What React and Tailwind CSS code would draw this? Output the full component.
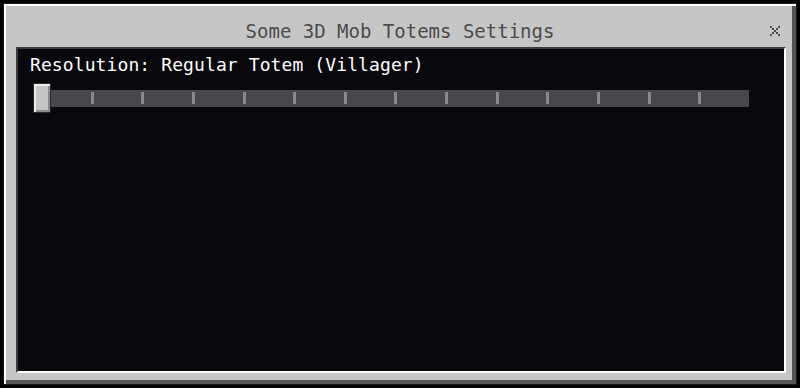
import React from "react";

const ticks = Array.from({ length: 15 }, (_, i) => i);

function CloseIcon() {
  const cells = [
    [0, 0], [8, 0],
    [2, 2], [6, 2],
    [4, 4],
    [2, 6], [6, 6],
    [0, 8], [8, 8],
  ];
  return (
    <svg width="10" height="10" viewBox="0 0 10 10" className="block">
      {cells.map(([x, y], i) => (
        <rect key={i} x={x} y={y} width="2" height="2" fill="#4a4a4a" />
      ))}
      <rect x="1" y="1" width="1" height="1" fill="#8a8a8a" />
      <rect x="8" y="1" width="1" height="1" fill="#8a8a8a" />
      <rect x="1" y="8" width="1" height="1" fill="#8a8a8a" />
      <rect x="8" y="8" width="1" height="1" fill="#8a8a8a" />
    </svg>
  );
}

export default function App() {
  return (
    <div className="w-[800px] h-[388px] bg-black pt-[3px] pl-[3px] pr-[3px] pb-[3px] [font-family:'DejaVu_Sans_Mono',monospace]">
      <div className="flex h-full flex-col bg-[#c6c6c6] border border-[#1a1a1a] shadow-[inset_2px_2px_0_#ffffff,inset_-4px_-4px_0_#555555]">
        <div className="grid h-[43px] grid-cols-[1fr_auto_1fr] items-start">
          <div />
          <div className="pt-[16px] text-[19px] leading-[22px] text-[#4c4c4c]">
            Some 3D Mob Totems Settings
          </div>
          <div className="flex justify-end pr-[16px] pt-[22px]">
            <CloseIcon />
          </div>
        </div>
        <div className="ml-[12px] mr-[10px] mb-[11px] flex-1 border-l-2 border-t-2 border-r-2 border-b-2 border-l-[#3c3c3c] border-t-[#3c3c3c] border-r-white border-b-white bg-[#09080c]">
          <div className="pl-[12px] pt-[5px] text-[18px] leading-[22px] tracking-[0.1px] text-white">
            Resolution: Regular Totem (Villager)
          </div>
          <div className="relative ml-[15px] mt-[7px] flex h-[30px] w-[716px] items-center">
            <div className="h-[17px] w-full bg-[#48474c]">
              <div className="flex h-full items-center justify-between pl-[7px] -mr-[3px]">
                {ticks.map((i) => (
                  <div
                    key={i}
                    className={
                      i === 0 || i === 14
                        ? "h-[12px] w-[3px]"
                        : "h-[12px] w-[3px] bg-[#8a898d]"
                    }
                  />
                ))}
              </div>
            </div>
            <div className="absolute left-0 top-0 h-[30px] w-[18px] border border-[#2a2a2a] bg-[#c6c6c6] shadow-[inset_2px_2px_0_#ececec,inset_-2px_-2px_0_#8b8b8b]" />
          </div>
        </div>
      </div>
    </div>
  );
}
